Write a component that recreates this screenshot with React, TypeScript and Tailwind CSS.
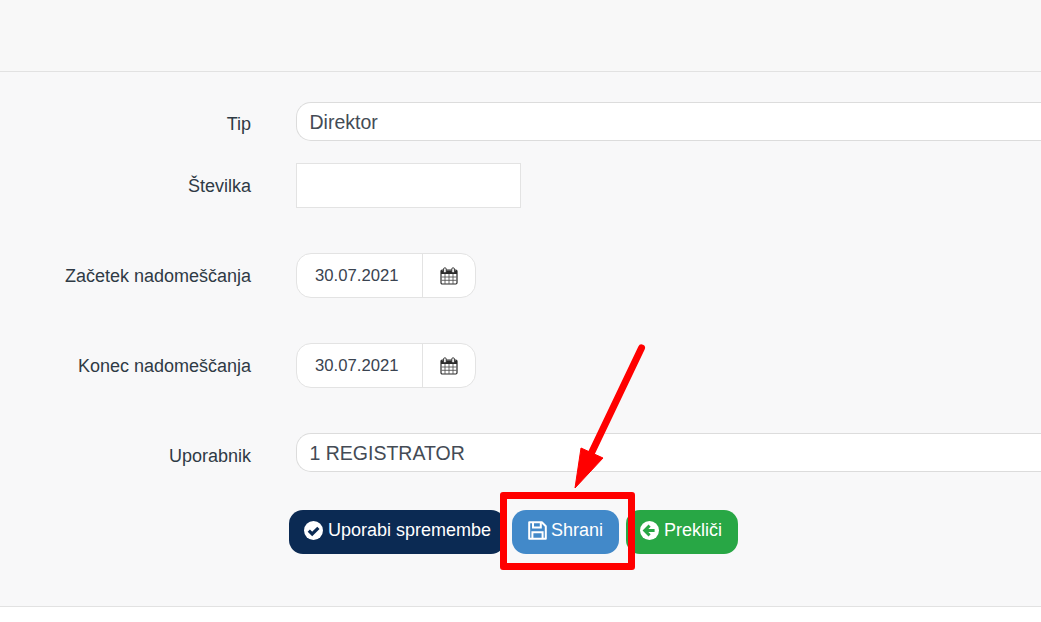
import React from "react";

function Row({ label, labelCls, children, cls }: { label: string; labelCls: string; children: React.ReactNode; cls: string }) {
  return (
    <div className={`flex items-start ${cls}`}>
      <label className={`w-[251px] shrink-0 text-right text-[18px] leading-[22px] text-[#2f3a45] ${labelCls}`}>{label}</label>
      <div className="ml-[45px] flex-1 min-w-0">{children}</div>
    </div>
  );
}

function Calendar() {
  return (
    <svg width="18" height="18" viewBox="0 0 18 18" aria-hidden="true">
      <rect x="1" y="3" width="16" height="14" rx="1.2" fill="#fff" stroke="#2b2b2b" strokeWidth="1.2" />
      <path d="M1 3.5h16V7H1z" fill="#2b2b2b" />
      <path d="M1.5 10h15M1.5 13.3h15M5 7v10M9 7v10M13 7v10" stroke="#555" strokeWidth="0.9" />
      <rect x="3.6" y="0.8" width="2.6" height="5" rx="1.2" fill="#fff" stroke="#2b2b2b" strokeWidth="0.9" />
      <rect x="11.8" y="0.8" width="2.6" height="5" rx="1.2" fill="#fff" stroke="#2b2b2b" strokeWidth="0.9" />
    </svg>
  );
}

function DateField() {
  return (
    <div className="flex h-[45px] w-[180px] items-stretch rounded-[15px] border border-[#e3e3e3] bg-white">
      <div className="flex w-[126px] items-center border-r border-[#e3e3e3] pl-[18px] text-[16.7px] text-[#3a4350]">30.07.2021</div>
      <div className="flex flex-1 items-center justify-center"><Calendar /></div>
    </div>
  );
}

function Select({ value }: { value: string }) {
  return (
    <div className="flex h-[39px] items-center rounded-l-[15px] border-y border-l border-[#dcdcdc] bg-white pl-[12.5px] pt-[2px] text-[19.5px] text-[#444b55]">
      {value}
    </div>
  );
}

export default function App() {
  return (
    <div className="relative h-[622px] w-[1041px] overflow-hidden bg-white font-['Liberation_Sans',Arial,sans-serif]">
      <div className="h-[72px] border-b border-[#e2e2e2] bg-[#f8f8f8]" />
      <div className="h-[535px] border-b border-[#e2e2e2] bg-[#f8f8f9] pt-[30px]">
        <Row label="Tip" labelCls="pt-[11px]" cls="h-[39px]"><Select value="Direktor" /></Row>
        <Row label="Številka" labelCls="pt-[12px]" cls="mt-[22px] h-[45px]">
          <div className="h-[45px] w-[225px] border border-[#e3e3e3] bg-white" />
        </Row>
        <Row label="Začetek nadomeščanja" labelCls="pt-[12px]" cls="mt-[45px] h-[45px]"><DateField /></Row>
        <Row label="Konec nadomeščanja" labelCls="pt-[12px]" cls="mt-[45px] h-[45px]"><DateField /></Row>
        <Row label="Uporabnik" labelCls="pt-[12px]" cls="mt-[45px] h-[39px]"><Select value="1 REGISTRATOR" /></Row>

        <div className="mt-[38px] ml-[289px] flex h-[44px] items-stretch text-[18px] text-white">
          <button className="flex w-[216px] items-center rounded-[14px] bg-[#0b2a53] pb-[3px] pl-[15px]">
            <svg width="19" height="19" viewBox="0 0 19 19" aria-hidden="true">
              <circle cx="9.5" cy="9.5" r="9.5" fill="#fff" />
              <path d="M4.8 9.6l3.4 3.4L14.4 6.8" fill="none" stroke="#0b2a53" strokeWidth="3.2" />
            </svg>
            <span className="ml-[5px]">Uporabi spremembe</span>
          </button>
          <button className="ml-[7px] flex w-[107px] items-center rounded-[14px] bg-[#4289c9] pb-[3px] pl-[16px]">
            <svg width="19" height="19" viewBox="0 0 19 19" aria-hidden="true" fill="none" stroke="#fff" strokeWidth="2">
              <path d="M1.2 1.2h12.6l4 4v12.6H1.2z" strokeLinejoin="round" />
              <path d="M5 1.4v5.2h7.8V1.4" />
              <path d="M4.4 17.6v-6.4h10.2v6.4" />
            </svg>
            <span className="ml-[4px]">Shrani</span>
          </button>
          <button className="ml-[7px] flex w-[112px] items-center rounded-[14px] bg-[#28a745] pb-[3px] pl-[14px]">
            <svg width="19" height="19" viewBox="0 0 19 19" aria-hidden="true">
              <circle cx="9.5" cy="9.5" r="9.5" fill="#fff" />
              <path d="M9.6 4.6L4.7 9.5l4.9 4.9M5.4 9.5h9.2" fill="none" stroke="#28a745" strokeWidth="3" />
            </svg>
            <span className="ml-[5px]">Prekliči</span>
          </button>
        </div>
      </div>

      <div className="absolute left-[500px] top-[492px] h-[78px] w-[135px] rounded-[3px] border-[7.5px] border-[#ff0000]" />
      <svg className="absolute left-[560px] top-[330px]" width="110" height="170" viewBox="0 0 110 170" aria-hidden="true">
        <path d="M81.5 18L30 126" stroke="#ff0000" strokeWidth="7" strokeLinecap="round" fill="none" />
        <path d="M15 158L21 118L43 128z" fill="#ff0000" stroke="#ff0000" strokeWidth="1" strokeLinejoin="round" />
      </svg>
    </div>
  );
}
